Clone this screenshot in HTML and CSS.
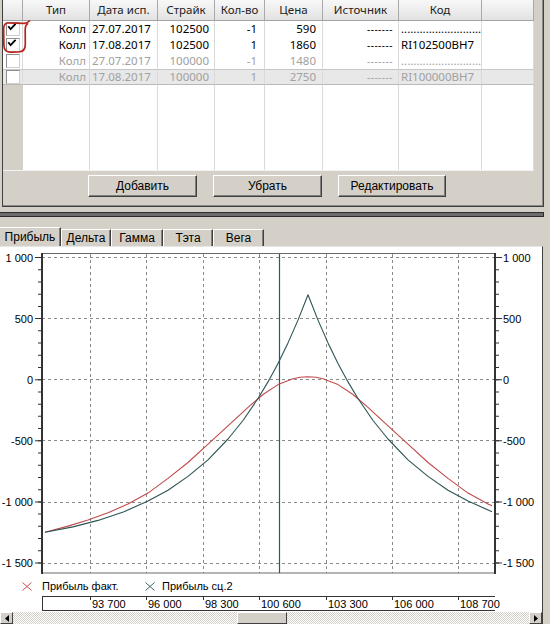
FILE: index.html
```html
<!DOCTYPE html>
<html lang="ru">
<head>
<meta charset="utf-8">
<title>Опционы</title>
<link rel="stylesheet" href="styles.css">
</head>
<body>
<div class="app">
  <section class="top-panel">
    <div class="grid">
      <div class="h"></div><div class="h">Тип</div><div class="h">Дата исп.</div><div class="h">Страйк</div><div class="h">Кол-во</div><div class="h">Цена</div><div class="h">Источник</div><div class="h">Код</div><div class="h"></div>

      <div class="row on">
        <div class="c k0"><span class="cb"><svg width="11" height="11" viewBox="0 0 11 11"><path d="M1.3 3.2 L3.6 6.2 L8.6 0.8" fill="none" stroke="#000" stroke-width="1.8"/></svg></span></div>
        <div class="c k1">Колл</div><div class="c k2">27.07.2017</div><div class="c k3">102500</div><div class="c k4">-1</div><div class="c k5">590</div><div class="c k6"><span class="dash">-------</span></div><div class="c k7">..........................</div><div class="c k8"></div>
      </div>
      <div class="row on">
        <div class="c k0"><span class="cb"><svg width="11" height="11" viewBox="0 0 11 11"><path d="M1.3 3.2 L3.6 6.2 L8.6 0.8" fill="none" stroke="#000" stroke-width="1.8"/></svg></span></div>
        <div class="c k1">Колл</div><div class="c k2">17.08.2017</div><div class="c k3">102500</div><div class="c k4">1</div><div class="c k5">1860</div><div class="c k6"><span class="dash">-------</span></div><div class="c k7">RI102500BH7</div><div class="c k8"></div>
      </div>
      <div class="row off">
        <div class="c k0"><span class="cb"></span></div>
        <div class="c k1">Колл</div><div class="c k2">27.07.2017</div><div class="c k3">100000</div><div class="c k4">-1</div><div class="c k5">1480</div><div class="c k6"><span class="dash">-------</span></div><div class="c k7">..........................</div><div class="c k8"></div>
      </div>
      <div class="row off sel">
        <div class="c k0"><span class="cb"></span></div>
        <div class="c k1">Колл</div><div class="c k2">17.08.2017</div><div class="c k3">100000</div><div class="c k4">1</div><div class="c k5">2750</div><div class="c k6"><span class="dash">-------</span></div><div class="c k7">RI100000BH7</div><div class="c k8"></div>
      </div>
      <div class="row fill">
        <div class="c k0"></div><div class="c"></div><div class="c"></div><div class="c"></div><div class="c"></div><div class="c"></div><div class="c"></div><div class="c"></div><div class="c"></div>
      </div>
    </div>
    <div class="btns">
      <button class="btn w109">Добавить</button>
      <button class="btn w109">Убрать</button>
      <button class="btn w108">Редактировать</button>
    </div>
  </section>

  <svg class="annot" width="34" height="37" viewBox="0 19 34 37">
    <path d="M29.5 20.8 C28 22.6 26.6 23.4 24 23.3 L8 23 C4.6 23 3.6 25.5 3.6 29.5 L3.9 45.5 C4.1 50 6.2 52.2 10.5 52.2 L18.5 52 C23 51.8 25.4 49 25.3 44.5 L25.2 30 C25.2 26.5 25.8 24.8 27.6 23.8" fill="none" stroke="#b8231a" stroke-width="1.7" stroke-linecap="round"/>
  </svg>

  <div class="splitter"></div>

  <nav class="tabs">
    <div class="tab active t1">Прибыль</div>
    <div class="tab t2">Дельта</div>
    <div class="tab t3">Гамма</div>
    <div class="tab t4">Тэта</div>
    <div class="tab t5">Вега</div>
  </nav>

  <section class="chart">
    <svg class="plot" width="542" height="330" viewBox="0 247 542 330">
      <g stroke="#8a8a8a" stroke-width="1" stroke-dasharray="3 3" fill="none">
        <path d="M42 257.5H495M42 318.5H495M42 379.5H495M42 440.5H495M42 502.5H495M42 563.5H495"/>
        <path d="M90.5 254V573M146.5 254V573M203.5 254V573M259.5 254V573M326.5 254V573M392.5 254V573M458.5 254V573"/>
      </g>
      <rect x="42.5" y="253.5" width="452.5" height="319.5" fill="none" stroke="#6a6a6a" stroke-width="1"/>
      <path d="M42 253V574M495 253V574" stroke="#333" stroke-width="2"/>
      <g stroke="#333" fill="none">
        <line x1="40" y1="257" x2="40" y2="574" stroke-width="4" stroke-dasharray="1 11.22"/>
        <line x1="38.5" y1="257" x2="38.5" y2="574" stroke-width="7" stroke-dasharray="1 60.1"/>
        <line x1="497" y1="257" x2="497" y2="574" stroke-width="4" stroke-dasharray="1 11.22"/>
        <line x1="498.5" y1="257" x2="498.5" y2="574" stroke-width="7" stroke-dasharray="1 60.1"/>
      </g>
      <g class="ylab" text-anchor="end">
        <text x="33" y="261.5">1 000</text>
        <text x="33" y="322.5">500</text>
        <text x="33" y="383.5">0</text>
        <text x="33" y="444.5">-500</text>
        <text x="33" y="506">-1 000</text>
        <text x="33" y="567">-1 500</text>
      </g>
      <g class="ylab">
        <text x="503" y="261.5">1 000</text>
        <text x="503" y="322.5">500</text>
        <text x="503" y="383.5">0</text>
        <text x="503" y="444.5">-500</text>
        <text x="503" y="506">-1 000</text>
        <text x="503" y="567">-1 500</text>
      </g>
      <path d="M279.5 254V573" stroke="#2f5a5a" stroke-width="1.2"/>
      <polyline fill="none" stroke="#c04a4a" stroke-width="1.1" stroke-linejoin="round"
        points="45,532.2 68,526.1 88,520 108,512.7 128,504.1 148,493.1 168,478.4 188,462.5 208,444.1 228,425.8 248,407.4 263,394.5 278,384.6 293,378.8 300,377.3 308,376.8 316,377.3 323,378.8 338,384.6 353,394.5 368,407.4 388,425.8 408,444.1 428,462.5 448,478.4 468,493.1 488,504.1 492,505.8"/>
      <polyline fill="none" stroke="#2c5454" stroke-width="1.1" stroke-linejoin="round"
        points="45,532.3 73,526.9 98,520.4 124,511.7 148,501.1 168,490.2 188,476.4 208,459.8 228,439 243,420.5 258,398.5 268,381.9 278,363.5 288,342.9 298,320.1 308,294.8 318,320.1 328,342.9 338,363.5 348,381.9 358,398.5 373,420.5 388,439 408,459.8 428,476.4 448,490.2 468,501.1 492,511.7"/>
    </svg>

    <div class="legend">
      <div class="lg lg1">
        <svg class="lx" width="10" height="9" viewBox="0 0 10 9"><path d="M0.5 0.5L9.5 8.5M9.5 0.5L0.5 8.5" stroke="#d05050" stroke-width="1"/></svg>
        <span>Прибыль факт.</span>
      </div>
      <div class="lg lg2">
        <svg class="lx" width="10" height="9" viewBox="0 0 10 9"><path d="M0.5 0.5L9.5 8.5M9.5 0.5L0.5 8.5" stroke="#3a6666" stroke-width="1"/></svg>
        <span>Прибыль сц.2</span>
      </div>
    </div>

    <svg class="xaxis" width="542" height="17" viewBox="0 595 542 17">
      <path d="M42 596.5H495M42 610.5H495M42.5 596V611" stroke="#333" stroke-width="1" fill="none"/>
      <path d="M90.5 596V600M146.5 596V600M203.5 596V600M259.5 596V600M326.5 596V600M392.5 596V600M458.5 596V600" stroke="#333" stroke-width="1"/>
      <g class="xlab">
        <text x="92" y="608">93 700</text>
        <text x="148" y="608">96 000</text>
        <text x="205" y="608">98 300</text>
        <text x="261" y="608">100 600</text>
        <text x="328" y="608">103 300</text>
        <text x="394" y="608">106 000</text>
        <text x="460" y="608">108 700</text>
      </g>
    </svg>

    <div class="hscroll">
      <div class="sb-btn"><svg width="4" height="7" viewBox="0 0 4 7"><path d="M4 0V7L0 3.5Z" fill="#000"/></svg></div>
      <div class="sb-track"><div class="sb-thumb"></div></div>
      <div class="sb-btn"><svg width="4" height="7" viewBox="0 0 4 7"><path d="M0 0V7L4 3.5Z" fill="#000"/></svg></div>
    </div>
  </section>
</div>
</body>
</html>
```
FILE: styles.css
```css
* { box-sizing: border-box; }
html, body { margin: 0; padding: 0; }
body {
  width: 550px;
  height: 624px;
  overflow: hidden;
  background: #d4d0c8;
  font-family: "Liberation Sans", Arial, sans-serif;
  font-size: 12px;
  color: #000;
}
.app { position: relative; width: 550px; height: 624px; }

/* ---------- top panel ---------- */
.top-panel {
  margin-left: 2px;
  width: 542px;
  height: 207px;
  border: 1px solid #404040;
  border-top: 0;
  box-shadow: inset -1px -1px 0 #8a8a8a;
}
.grid {
  display: grid;
  grid-template-columns: 20px 67px 68px 57px 50px 58px 76px 83px 52px;
  grid-template-rows: 21px 16px 16px 16px 16px 85px;
  width: 531px;
  height: 171px;
  background: #fff;
  border-bottom: 1px solid #f2f2f2;
  font-family: "Noto Sans", "DejaVu Sans", sans-serif;
  font-size: 11.5px;
}
.h {
  background: linear-gradient(#f8f8f8, #e2e2e2);
  border-right: 1px solid #a9a9a9;
  border-bottom: 1px solid #a4a4a4;
  text-align: center;
  line-height: 20px;
  color: #222;
  white-space: nowrap;
}
.row { display: contents; }
.row.on { color: #000; }
.row.off { color: #a0a0a0; }
.c {
  border-right: 1px solid #dadada;
  line-height: 16px;
  white-space: nowrap;
  overflow: hidden;
}
.row.sel .c {
  background: #e8e8e8;
  border-top: 1px solid #c6c6c6;
  border-bottom: 1px solid #b9b9b9;
  line-height: 14px;
}
.row.fill .k0 { background: #d4d0c8; border-right-color: #d4d0c8; }
.k1 { text-align: right; padding-right: 3px; }
.k2 { padding-left: 2px; }
.k3 { text-align: right; padding-right: 5px; }
.k4 { text-align: right; padding-right: 7px; }
.k5 { text-align: right; padding-right: 6px; }
.k6 { text-align: right; padding-right: 5px; }
.k7 { padding-left: 2px; }
.dash { letter-spacing: 0.5px; font-size: 10px; }
.cb {
  display: block;
  width: 14px;
  height: 14px;
  margin: 1px 0 0 3px;
  background: #fff;
  border: 1px solid #8e8e8e;
  border-right-color: #cfcfcf;
  border-bottom-color: #cfcfcf;
}
.cb svg { display: block; }
.row.sel .cb { margin-top: 0; }

.btns {
  display: flex;
  gap: 16px;
  margin: 4px 0 0 85px;
}
.btn {
  appearance: none;
  margin: 0;
  padding: 0 0 1px;
  height: 22px;
  background: #d4d0c8;
  border: 1px solid;
  border-color: #fff #404040 #404040 #fff;
  box-shadow: inset -1px -1px 0 #808080;
  font-family: "Liberation Sans", Arial, sans-serif;
  font-size: 12px;
  color: #000;
}
.w109 { width: 109px; }
.w108 { width: 108px; }

.annot { position: absolute; left: 0; top: 19px; }

/* ---------- splitter ---------- */
.splitter {
  margin-top: 5px;
  width: 544px;
  height: 5px;
  background: #6c6c6c;
  border: 1px solid #2c2c2c;
  border-left: 0;
}

/* ---------- tabs ---------- */
.tabs {
  display: flex;
  align-items: flex-end;
  height: 19px;
  margin-top: 10px;
}
.tab {
  height: 17px;
  border-top: 1px solid #fff;
  border-left: 1px solid #fff;
  border-right: 1px solid #404040;
  box-shadow: inset -1px 0 0 #808080;
  text-align: center;
  line-height: 16px;
  font-size: 12px;
  white-space: nowrap;
}
.tab.active { height: 19px; line-height: 19px; border-left: 0; }
.t1 { width: 61px; }
.t2 { width: 50px; }
.t3 { width: 52px; }
.t4 { width: 50px; }
.t5 { width: 51px; }

/* ---------- chart ---------- */
.chart {
  width: 543px;
  height: 378px;
  background: #fff;
  border-top: 1px solid #e6e6e6;
  border-right: 1px solid #404040;
  display: flex;
  flex-direction: column;
}
.plot, .xaxis { display: block; }
.ylab text, .xlab text {
  font-family: "Liberation Sans", Arial, sans-serif;
  font-size: 11px;
  fill: #000;
}
.legend {
  display: flex;
  align-items: center;
  height: 18px;
  padding-left: 22px;
  font-size: 11px;
}
.lg { display: flex; align-items: center; }
.lg1 { width: 123px; }
.lg1 .lx { margin-right: 10px; }
.lg2 .lx { margin-right: 7px; }
.lx { display: block; }

.hscroll {
  display: flex;
  height: 12px;
}
.sb-btn {
  width: 13px;
  height: 12px;
  background: #d4d0c8;
  border: 1px solid;
  border-color: #fff #404040 #404040 #fff;
  display: flex;
  align-items: center;
  justify-content: center;
}
.sb-btn svg { display: block; }
.sb-track {
  flex: 1;
  display: flex;
  background: repeating-conic-gradient(#d4d0c8 0 25%, #fff 0 50%) 0 0 / 2px 2px;
}
.sb-thumb {
  margin-left: 224px;
  width: 50px;
  height: 12px;
  background: #d4d0c8;
  border: 1px solid;
  border-color: #fff #404040 #404040 #fff;
}
```
